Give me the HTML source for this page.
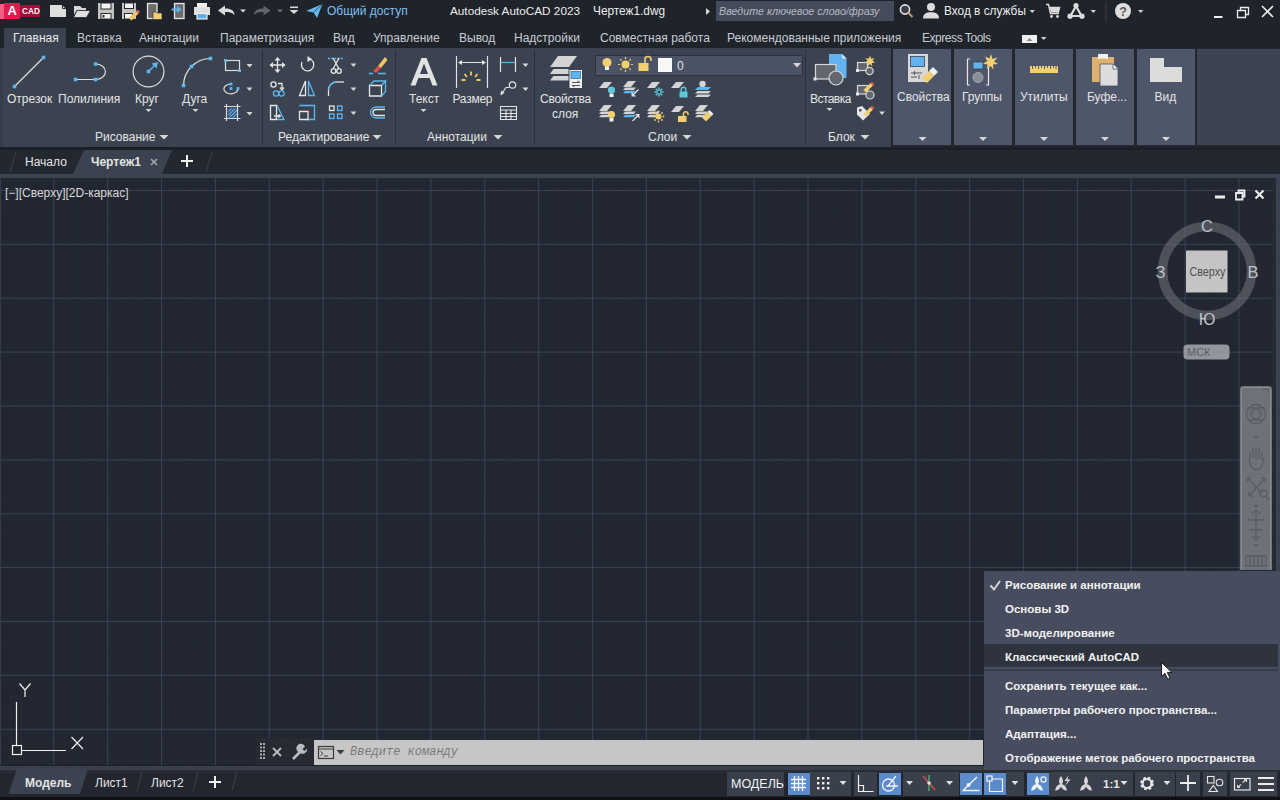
<!DOCTYPE html>
<html><head><meta charset="utf-8">
<style>
*{margin:0;padding:0;box-sizing:border-box}
html,body{width:1280px;height:800px;overflow:hidden;background:#212630;font-family:"Liberation Sans",sans-serif;font-size:12px;color:#e4e4e4}
.a{position:absolute}
.t{position:absolute;white-space:nowrap;line-height:14px}
svg{position:absolute;overflow:visible}
</style></head><body>
<!-- title bar + tab row -->
<div class="a" style="left:0;top:0;width:1280px;height:48px;background:#1f232a"></div>
<!-- ribbon -->
<div class="a" style="left:0;top:48px;width:1280px;height:99px;background:#3b4350"></div>
<div class="a" style="left:0;top:147px;width:1280px;height:3px;background:#1c1f25"></div>
<div class="a" style="left:0;top:48px;width:3px;height:99px;background:#363c48"></div>
<!-- file tabs row -->
<div class="a" style="left:0;top:150px;width:1280px;height:24px;background:#23272f"></div>
<div class="a" style="left:0;top:174px;width:1280px;height:4px;background:#3b4350"></div>
<!-- viewport -->
<div class="a" id="vp" style="left:0;top:178px;width:1280px;height:587px;background-color:#212630;
background-image:linear-gradient(90deg,rgba(80,86,122,.5) 1px,transparent 1px),linear-gradient(0deg,rgba(80,86,122,.5) 1px,transparent 1px),linear-gradient(90deg,rgba(60,66,86,.12) 1px,transparent 1px),linear-gradient(0deg,rgba(60,66,86,.12) 1px,transparent 1px);
background-size:53.88px 53.88px,53.88px 53.88px,10.776px 10.776px,10.776px 10.776px;background-position:53.3px 13px,53.3px 13px,53.3px 13px,53.3px 13px"></div>
<div class="a" style="left:1273px;top:178px;width:3px;height:587px;background:#262a33"></div>
<div class="a" style="left:1276px;top:174px;width:4px;height:592px;background:#3a4150"></div>
<div class="a" style="left:0;top:178px;width:1px;height:587px;background:#353b48"></div>
<!-- status bar -->
<div class="a" style="left:0;top:765px;width:1280px;height:1px;background:#1c1f26"></div>
<div class="a" style="left:0;top:766px;width:1280px;height:4px;background:#3a3f4c"></div>
<div class="a" style="left:0;top:770px;width:1280px;height:27px;background:#23262e"></div>
<div class="a" style="left:0;top:770px;width:1280px;height:3px;background:#292d36"></div>
<div class="a" style="left:0;top:797px;width:1280px;height:3px;background:#0e1014"></div>

<svg style="left:0;top:0" width="1280" height="800" viewBox="0 0 1280 800">
 <path d="M73 174L84 150H172L162 174Z" fill="#3b4350"/>
 <path d="M8.5 794L17 769H88L80 794Z" fill="#3b4350"/>
</svg>
<!-- ===== TITLE BAR ===== -->
<div class="a" style="left:4px;top:3px;width:16px;height:16px;background:#e5174e"></div>
<div class="a" style="left:0;top:4px;width:4px;height:15px;background:#ee5f86"></div>
<div class="t" style="left:7.5px;top:4px;font-weight:bold;font-size:13px;color:#fff">A</div>
<div class="a" style="left:20px;top:5px;width:20px;height:12px;background:#9c0f38"></div>
<div class="t" style="left:22px;top:4.5px;font-weight:bold;font-size:8.2px;color:#f8f8f8;letter-spacing:.1px">CAD</div>
<div class="t" style="left:327px;top:4px;color:#7cc0f0;font-size:12px">Общий доступ</div>
<div class="t" style="left:450px;top:4px;color:#ececec;font-size:11.75px">Autodesk AutoCAD 2023</div>
<div class="t" style="left:593px;top:4px;color:#ececec;font-size:11.85px">Чертеж1.dwg</div>
<div class="a" style="left:716px;top:1px;width:178px;height:20px;background:#454b5b"></div>
<div class="t" style="left:719px;top:4px;color:#b4b8c0;font-style:italic;font-size:10.7px">Введите ключевое слово/фразу</div>
<div class="t" style="left:944px;top:4px;color:#ececec;font-size:11.85px">Вход в службы</div>

<!-- ===== RIBBON TABS ===== -->
<div class="a" style="left:4px;top:28px;width:62px;height:20px;background:#3b4350"></div>
<div class="t" style="left:13px;top:31px;color:#e8e8e8;font-size:12px">Главная</div>
<div class="t" style="left:77px;top:31px;color:#c8ccd2;font-size:12px">Вставка</div>
<div class="t" style="left:139px;top:31px;color:#c8ccd2;font-size:12px">Аннотации</div>
<div class="t" style="left:220px;top:31px;color:#c8ccd2;font-size:12px">Параметризация</div>
<div class="t" style="left:333px;top:31px;color:#c8ccd2;font-size:12px">Вид</div>
<div class="t" style="left:373px;top:31px;color:#c8ccd2;font-size:12px">Управление</div>
<div class="t" style="left:459px;top:31px;color:#c8ccd2;font-size:12px">Вывод</div>
<div class="t" style="left:514px;top:31px;color:#c8ccd2;font-size:12px">Надстройки</div>
<div class="t" style="left:600px;top:31px;color:#c8ccd2;font-size:12px">Совместная работа</div>
<div class="t" style="left:727px;top:31px;color:#c8ccd2;font-size:12px">Рекомендованные приложения</div>
<div class="t" style="left:922px;top:31px;color:#c8ccd2;font-size:12px;letter-spacing:-.45px">Express Tools</div>

<!-- ===== RIBBON PANELS ===== -->
<div class="a" style="left:262px;top:50px;width:1px;height:95px;background:#2a2f38"></div>
<div class="a" style="left:395px;top:50px;width:1px;height:95px;background:#2a2f38"></div>
<div class="a" style="left:534px;top:50px;width:1px;height:95px;background:#2a2f38"></div>
<div class="a" style="left:805px;top:50px;width:1px;height:95px;background:#2a2f38"></div>
<div class="a" style="left:891px;top:48px;width:389px;height:99px;background:#23272f"></div>
<div class="a" style="left:893px;top:49px;width:58px;height:96px;background:#4e566a"></div>
<div class="a" style="left:954px;top:49px;width:58px;height:96px;background:#4e566a"></div>
<div class="a" style="left:1015px;top:49px;width:58px;height:96px;background:#4e566a"></div>
<div class="a" style="left:1076px;top:49px;width:58px;height:96px;background:#4e566a"></div>
<div class="a" style="left:1137px;top:49px;width:58px;height:96px;background:#4e566a"></div>
<div class="a" style="left:1197px;top:49px;width:83px;height:96px;background:#3c4351"></div>

<div class="t" style="left:7px;top:92px">Отрезок</div>
<div class="t" style="left:58px;top:92px">Полилиния</div>
<div class="t" style="left:135px;top:92px">Круг</div>
<div class="t" style="left:182px;top:92px">Дуга</div>
<div class="t" style="left:409px;top:92px">Текст</div>
<div class="t" style="left:452.5px;top:92px;letter-spacing:-.25px">Размер</div>
<div class="t" style="left:540px;top:92px;letter-spacing:-.2px">Свойства</div>
<div class="t" style="left:552px;top:107px">слоя</div>
<div class="t" style="left:810px;top:92px;letter-spacing:-.55px">Вставка</div>
<div class="t" style="left:897px;top:90px">Свойства</div>
<div class="t" style="left:962px;top:90px">Группы</div>
<div class="t" style="left:1020px;top:90px">Утилиты</div>
<div class="t" style="left:1087px;top:90px">Буфе...</div>
<div class="t" style="left:1154.5px;top:90px">Вид</div>

<div class="t" style="left:95px;top:130px">Рисование</div>
<div class="t" style="left:278px;top:130px">Редактирование</div>
<div class="t" style="left:427px;top:130px">Аннотации</div>
<div class="t" style="left:648px;top:130px">Слои</div>
<div class="t" style="left:828px;top:130px">Блок</div>

<!-- ===== FILE TABS ===== -->
<div class="t" style="left:25px;top:155px">Начало</div>
<div class="t" style="left:91px;top:155px;font-weight:bold">Чертеж1</div>

<!-- ===== VIEWPORT ===== -->
<div class="t" style="left:5px;top:186px;color:#d8d8d8">[−][Сверху][2D-каркас]</div>

<!-- ===== COMMAND LINE ===== -->
<div class="a" style="left:256px;top:738px;width:58px;height:27px;background:#262a33"></div>
<div class="a" style="left:314px;top:740px;width:669px;height:25px;background:#c6c6c6"></div>
<div class="t" style="left:350px;top:745px;color:#7a7a7a;font-style:italic;font-family:'Liberation Mono',monospace;font-size:12px">Введите  команду</div>

<!-- ===== STATUS BAR ===== -->
<div class="t" style="left:25px;top:776px;font-weight:bold">Модель</div>
<div class="t" style="left:95px;top:776px">Лист1</div>
<div class="t" style="left:151px;top:776px">Лист2</div>

<!-- ===== ICONS (title bar) ===== -->
<svg style="left:0;top:0" width="1280" height="800" viewBox="0 0 1280 800">
<g id="qat">
 <path d="M50 5H62L66 9V17H50Z" fill="#dedede"/>
 <path d="M62.5 5V8.5H66" fill="none" stroke="#2a2d33" stroke-width="1"/>
 <path d="M74 6H80L82 8H86V10.5H76.5L74 15Z" fill="#d6d6d6"/>
 <path d="M77 10.5H90.5L86.5 17.5H73.5Z" fill="#e0e0e0" stroke="#1f232a" stroke-width=".8"/>
 <rect x="98" y="3" width="16" height="16" fill="#c2c2c2"/>
 <rect x="101" y="3" width="10" height="6" fill="#f2f2f2" stroke="#2b2b2b" stroke-width="1"/>
 <rect x="101" y="13.5" width="10" height="5.5" fill="#f2f2f2" stroke="#2b2b2b" stroke-width="1"/>
 <rect x="102.5" y="15" width="2" height="2.5" fill="#2b2b2b"/>
 <rect x="122" y="3" width="14" height="16" fill="#c2c2c2"/>
 <rect x="124.5" y="3" width="9" height="5.5" fill="#f2f2f2" stroke="#2b2b2b" stroke-width="1"/>
 <rect x="124.5" y="13.5" width="8" height="5.5" fill="#f2f2f2" stroke="#2b2b2b" stroke-width="1"/>
 <path d="M129 18L136 11L138.5 13.5L131.5 20.5Z" fill="#f0c860"/>
 <path d="M136 11L137.5 9.5L140 12L138.5 13.5Z" fill="#e06060"/>
 <rect x="147.5" y="3.5" width="9.5" height="15" fill="#6c6c6c" stroke="#e6e6e6" stroke-width="1.3"/>
 <path d="M153 12H156L157 13H162V19.5H153Z" fill="#f2cf70" stroke="#1f232a" stroke-width=".6"/>
 <rect x="174.5" y="3.5" width="9.5" height="15" fill="#6c6c6c" stroke="#e6e6e6" stroke-width="1.3"/>
 <path d="M171.5 8.5H177V6L181.5 9.5L177 13V10.5H171.5Z" fill="#62b4f0"/>
 <rect x="197" y="3" width="10" height="5" fill="#f0f0f0"/>
 <rect x="194" y="7" width="16" height="8" fill="#e0e0e0"/>
 <rect x="197" y="13.5" width="10" height="5.5" fill="#5ab0ee" stroke="#f0f0f0" stroke-width="1.2"/>
 <path d="M218 10.5L225 5.5V8.5C230 8.5 234.5 10 234.5 15C232.5 12.5 229 12 225 12V15.5Z" fill="#dcdcdc"/>
 <path d="M240 9.5H246L243 12.5Z" fill="#d8d8d8"/>
 <path d="M270.5 10.5L263.5 5.5V8.5C258.5 8.5 254 10 254 15C256 12.5 259.5 12 263.5 12V15.5Z" fill="#5f646c"/>
 <path d="M277 9.5H283L280 12.5Z" fill="#70747c"/>
 <rect x="290" y="6.5" width="8" height="1.6" fill="#d8d8d8"/>
 <path d="M289.5 10H298.5L294 14Z" fill="#d8d8d8"/>
 <path d="M306 11L322.5 4L317 18L313.5 12.5Z" fill="#66b8f0"/>
 <path d="M313.5 12.5L322.5 4" stroke="#1f232a" stroke-width=".7"/>
</g>
<g id="tright">

 <path d="M706 8V15L710 11.5Z" fill="#d8d8d8"/>
 <circle cx="905" cy="9.5" r="4.6" fill="#3a3e46" stroke="#e2e2e2" stroke-width="1.6"/>
 <path d="M908.5 13L912.5 17" stroke="#c49a68" stroke-width="2"/>
 <circle cx="931" cy="7" r="4" fill="#dcdcdc"/>
 <path d="M923 18.5C923 13.8 926 12.2 931 12.2C936 12.2 939 13.8 939 18.5Z" fill="#dcdcdc"/>
 <path d="M1029.5 10H1035L1032.25 13Z" fill="#d0d0d0"/>
 <path d="M1046 4.5H1048.5L1050.5 13.5H1058L1059.5 7.5H1049.5" fill="none" stroke="#dcdcdc" stroke-width="1.5"/>
 <path d="M1050 8H1059V12.5H1051Z" fill="#dcdcdc"/>
 <circle cx="1051.5" cy="16.5" r="1.4" fill="#dcdcdc"/><circle cx="1057.5" cy="16.5" r="1.4" fill="#dcdcdc"/>
 <path d="M1076 6L1070.5 16M1076 6L1081.5 16M1070.5 16H1081.5" stroke="#dcdcdc" stroke-width="2.2" fill="none"/>
 <circle cx="1076" cy="5.5" r="2.6" fill="#dcdcdc"/><circle cx="1070" cy="16.2" r="2.6" fill="#dcdcdc"/><circle cx="1082" cy="16.2" r="2.6" fill="#dcdcdc"/>
 <path d="M1090.5 10H1096L1093.25 13Z" fill="#d0d0d0"/>
 <rect x="1105.5" y="2" width="1" height="20" fill="#3c414a"/>
 <circle cx="1123" cy="11" r="8" fill="#dedede"/>
 <text x="1123" y="15.5" text-anchor="middle" font-family="Liberation Sans" font-size="12.5" font-weight="bold" fill="#58585a">?</text>
 <path d="M1138 10H1143.5L1140.75 13Z" fill="#d0d0d0"/>
 <rect x="1214" y="16" width="8.5" height="2" fill="#ececec"/>
 <path d="M1237.5 10.5H1245.5V17.5H1237.5Z M1240.5 10.5V7.5H1248.5V14.5H1245.5" fill="none" stroke="#ececec" stroke-width="1.3"/>
 <path d="M1262 6L1273 17M1273 6L1262 17" stroke="#ececec" stroke-width="1.6"/>
 <rect x="1022" y="35" width="15" height="8" fill="#f0f0f0"/>
 <path d="M1026.5 41H1032.5L1029.5 38Z" fill="#8a8a8a"/>
 <path d="M1041 37H1046.5L1043.75 40Z" fill="#d0d0d0"/>
</g>
<g id="draw" fill="none" stroke="#dcdcdc" stroke-width="1.2">
 <path d="M14.5 86.5L43.5 57.5"/>
 <path d="M75.5 79.5H95.5M95.5 64A10 7.75 0 0 1 95.5 79.5"/>
 <circle cx="148.5" cy="71.5" r="15.4"/>
 <path d="M148.5 71.5L155 65" stroke="#5cb8f2" stroke-width="1.5"/>
 <path d="M158 62L151.5 63.5L156.5 68.5Z" fill="#5cb8f2" stroke="none"/>
 <path d="M183.5 85.5A27.3 27.3 0 0 1 210.5 58.5"/>
 <rect x="225.5" y="60.5" width="14" height="10"/>
 <path d="M231 84.2A7 4.8 0 1 0 237.8 88.5"/>
 <path d="M226.5 104V121M237.5 104V121M224 106.5H240.5M224 118.5H240.5"/>
 <g fill="#5cb8f2" stroke="none">
  <rect x="12.75" y="84.75" width="3.5" height="3.5"/><rect x="41.75" y="55.75" width="3.5" height="3.5"/>
  <rect x="73.75" y="77.75" width="3.5" height="3.5"/><rect x="93.75" y="77.75" width="3.5" height="3.5"/><rect x="93.75" y="62.25" width="3.5" height="3.5"/>
  <rect x="146.75" y="69.75" width="3.5" height="3.5"/>
  <rect x="181.75" y="83.75" width="3.5" height="3.5"/><rect x="189.75" y="64.75" width="3.5" height="3.5"/><rect x="208.75" y="56.75" width="3.5" height="3.5"/>
  <rect x="224" y="59" width="2.8" height="2.8"/><rect x="238.2" y="69.2" width="2.8" height="2.8"/>
  <rect x="229.6" y="82.6" width="2.8" height="2.8"/><rect x="229.6" y="87.1" width="2.8" height="2.8"/><rect x="236.6" y="87.1" width="2.8" height="2.8"/>
  <rect x="228" y="108" width="9" height="10" fill="#35608c"/>
 </g>
 <path d="M228.5 111.5L231.5 108.5M228.5 115L235 108.5M229.5 117.5L237 110M233 117.5L237 113.5" stroke="#8ccaf6" stroke-width="1"/>
</g>
<g id="tris" fill="#d6d6d6">
 <path d="M246.5 64H252.5L249.5 67.5Z"/><path d="M246.5 87.5H252.5L249.5 91Z"/><path d="M246.5 112H252.5L249.5 115.5Z"/>
 <path d="M145.5 109H151.5L148.5 112Z"/><path d="M192.5 109H198.5L195.5 112Z"/>
 <path d="M159.5 135H168.5L164 139.5Z"/>
 <path d="M350.5 63.5H356.5L353.5 67Z"/><path d="M350.5 87.5H356.5L353.5 91Z"/><path d="M350.5 111.5H356.5L353.5 115Z"/>
 <path d="M372.5 135H381.5L377 139.5Z"/>
 <path d="M420.5 109H426.5L423.5 112Z"/>
 <path d="M522.5 63.5H528.5L525.5 67Z"/><path d="M522.5 87.5H528.5L525.5 91Z"/>
 <path d="M493.5 135H502.5L498 139.5Z"/>
 <path d="M682.5 135H691.5L687 139.5Z"/>
 <path d="M826.5 108H832.5L829.5 111Z"/><path d="M879 111.5H885L882 115Z"/>
 <path d="M860.5 135H869.5L865 139.5Z"/>
 <path d="M918.5 137H926.5L922.5 141Z"/><path d="M979 137H987L983 141Z"/><path d="M1040 137H1048L1044 141Z"/><path d="M1101 137H1109L1105 141Z"/><path d="M1162 137H1170L1166 141Z"/>
</g>
<g id="edit" fill="none" stroke="#e6e6e6" stroke-width="1.3">
 <path d="M277.5 58V72M270.5 65H284.5"/>
 <path d="M277.5 57L274.5 60.5H280.5ZM277.5 73L274.5 69.5H280.5ZM269.5 65L273 62V68ZM285.5 65L282 62V68Z" fill="#e6e6e6" stroke="none"/>
 <path d="M310.5 59.2A6.2 6.2 0 1 1 302 62"/>
 <path d="M307.5 56L312 59.3L307.5 62Z" fill="#e6e6e6" stroke="none"/>
 <path d="M328 58.5H344" stroke="#5cb8f2" stroke-dasharray="2 1.2"/>
 <path d="M333 58L339 69M339 58L333 69"/>
 <circle cx="333.5" cy="71" r="2.3"/><circle cx="339" cy="71" r="2.3"/>
 <path d="M378 66L385 57L387.5 60L381 68Z" fill="#f0c860" stroke="none"/>
 <path d="M373 71L378 66L381 68L376 73Z" fill="#e05050" stroke="none"/>
 <path d="M369 73.5H373M378 73.5H386" stroke="#5cb8f2"/>
 <circle cx="273.5" cy="84.5" r="2.6"/>
 <path d="M278 83.5H282V88.5" /><path d="M280 87.5L282 90L284 87.5" />
 <circle cx="276" cy="93.5" r="2.6" stroke="#5cb8f2"/><circle cx="281.5" cy="93.5" r="2.6" stroke="#5cb8f2"/>
 <path d="M299.5 95.5L305.5 81V95.5Z"/><path d="M308.5 81L314.5 95.5H308.5Z" stroke="#5cb8f2"/>
 <path d="M328.5 96V90A8 8 0 0 1 336.5 82" stroke="#e6e6e6"/><path d="M336.5 82H344" />
 <path d="M328.5 90A8 8 0 0 1 336.5 82" stroke="#5cb8f2"/>
 <path d="M369.5 85.5H381.5V96H369.5Z"/><path d="M369.5 85.5L374 81H385.5L381.5 85.5M385.5 81V91.5L381.5 96" stroke="#5cb8f2"/>
 <path d="M270.5 105.5H276.5V119.5H270.5Z"/><path d="M277 105.5L284 119.5H277" stroke="#5cb8f2"/>
 <path d="M274 116H280M278.5 114.5L280.5 116L278.5 117.5"/>
 <path d="M299.5 105.5H314.5V119.5H305" stroke="#5cb8f2"/><path d="M299.5 111.5H308V119.5H299.5Z"/>
 <rect x="329.5" y="106" width="4.5" height="4.5"/><rect x="337.5" y="106" width="4.5" height="4.5" stroke="#5cb8f2"/>
 <rect x="329.5" y="114" width="4.5" height="4.5" stroke="#5cb8f2"/><rect x="337.5" y="114" width="4.5" height="4.5" stroke="#5cb8f2"/>
 <path d="M385 107H376A5.5 5.5 0 0 0 376 118H385" stroke="#5cb8f2"/>
 <path d="M385 109.5H376A3 3 0 0 0 376 115.5H385"/>
</g>
<g id="annot">
 <path d="M421.5 58H426.5L437.5 85.5H432.5L429.6 78H418.4L415.5 85.5H410.5ZM424 63.5L420 74H428Z" fill="#e2e2e2" fill-rule="evenodd"/>
 <path d="M456.5 56V88M487.5 56V88M459 62.5H485" fill="none" stroke="#e2e2e2" stroke-width="1.2"/>
 <path d="M458 62.5L462 60V65ZM486 62.5L482 60V65Z" fill="#e2e2e2"/>
 <path d="M471 71.5V75.5M464.5 74L467 77M477.5 74L475 77M461.5 80H465.5M476.5 80H480.5" stroke="#f0c860" stroke-width="1.8"/>
 <path d="M500.5 57V72M515.5 57V72" stroke="#e2e2e2" stroke-width="1.2"/>
 <path d="M501 62.5H515" stroke="#5cb8f2" stroke-width="1.2"/>
 <circle cx="512.5" cy="85" r="3.2" fill="none" stroke="#e2e2e2" stroke-width="1.2"/>
 <path d="M509.5 87.5L506 87.5L501.5 94" fill="none" stroke="#e2e2e2" stroke-width="1.2"/>
 <path d="M500.5 95.5L501 90.5L504.5 93Z" fill="#e2e2e2"/>
 <path d="M500.5 106.5H516.5V119.5H500.5ZM500.5 110H516.5M500.5 113.5H516.5M500.5 116.5H516.5M506 110V119.5M511 110V119.5" fill="none" stroke="#e2e2e2" stroke-width="1.1"/>
</g>
<g id="layers">
<path d="M558 56H577L569 67H550Z" fill="#d4d4d4"/>
<path d="M553.5 69H576L572.5 74H550Z" fill="#d4d4d4"/>
<path d="M553.5 76H576L572.5 80.5H550Z" fill="#d4d4d4"/>
<rect x="569" y="69.5" width="13.5" height="19" fill="#f0f0f0" stroke="#3b4350" stroke-width="1"/>
<rect x="571" y="71.5" width="9.5" height="7" fill="#5cb8f2" stroke="#3a4a5a" stroke-width=".6"/>
<path d="M572 82.5H580M577.5 81L580 82.5M572 85.5H580M574.5 87L572 85.5" stroke="#555" stroke-width="1" fill="none"/>
<rect x="595.5" y="55.5" width="207" height="20" fill="#4b5366" stroke="#2c313a" stroke-width="1"/>
<circle cx="607" cy="62.5" r="4.5" fill="#f2cf70"/><rect x="605" y="66.5" width="4" height="3.5" fill="#f0f0f0"/>
<circle cx="625.5" cy="64.5" r="4" fill="#f2cf70"/>
<path d="M625.5 57V59M625.5 70V72M618 64.5H620M631 64.5H633M620.2 59.2L621.6 60.6M629.4 68.4L630.8 69.8M630.8 59.2L629.4 60.6M621.6 68.4L620.2 69.8" stroke="#f2cf70" stroke-width="1.2"/>
<rect x="638.5" y="63" width="10" height="8" fill="#f2cf70"/>
<path d="M645 63V59.5A3 3 0 0 1 651 59.5V61" fill="none" stroke="#f2cf70" stroke-width="1.6"/>
<rect x="658" y="58" width="14" height="14" fill="#f8f8f8"/>
<text x="677" y="70" font-family="Liberation Sans" font-size="12" fill="#e4e4e4">0</text>
<path d="M793 63H801L797 67.5Z" fill="#d6d6d6"/>
<path d="M604 82H612L607 88H599Z" fill="#d4d4d4"/>
<circle cx="611.5" cy="90" r="3.6" fill="#5cc8d8"/><rect x="609.5" y="93.5" width="4" height="3.5" fill="#f0f0f0"/>
<path d="M628 81H636L631 87H623Z" fill="#d4d4d4"/><path d="M625.2 87.5H636L633.8 90.1H623Z" fill="#d4d4d4"/><path d="M625.2 90.7H636L633.8 93.3H623Z" fill="#5cb8f2"/>
<path d="M638.5 89.5L632.5 95.5" stroke="#e6e6e6" stroke-width="1.3"/><path d="M631.5 96.5V92L636 96.5Z" fill="#e6e6e6"/>
<path d="M652 82H660L655 88H647Z" fill="#d4d4d4"/>
<path d="M654.5 92H663.5M659 87.5V96.5M655.8 88.8L662.2 95.2M662.2 88.8L655.8 95.2" stroke="#5cc8d8" stroke-width="1.5"/><circle cx="659" cy="92" r="1.6" fill="#3b4350"/>
<path d="M676 82H684L679 88H671Z" fill="#d4d4d4"/>
<rect x="679.5" y="91.5" width="8" height="6" fill="#5cc8d8"/><path d="M681.2 91.5V89.5A2.3 2.3 0 0 1 685.8 89.5V91.5" fill="none" stroke="#5cc8d8" stroke-width="1.5"/>
<circle cx="702.5" cy="84" r="3.2" fill="#d4d4d4"/>
<path d="M698 87H711L708 90H695Z" fill="#5cb8f2"/><path d="M697.6 91H711L708.4 93.6H695Z" fill="#d4d4d4"/><path d="M697.6 94.5H711L708.4 97.1H695Z" fill="#d4d4d4"/>
<path d="M604 105H612L607 111H599Z" fill="#d4d4d4"/><path d="M601.2 111.5H612L609.8 114.1H599Z" fill="#d4d4d4"/><path d="M601.2 114.7H612L609.8 117.3H599Z" fill="#d4d4d4"/>
<circle cx="611.5" cy="114.5" r="3.6" fill="#f2cf70"/><rect x="609.5" y="118" width="4" height="3.5" fill="#f0f0f0"/>
<path d="M628 105H636L631 111H623Z" fill="#d4d4d4"/><path d="M625.2 111.5H636L633.8 114.1H623Z" fill="#d4d4d4"/><path d="M625.2 114.7H636L633.8 117.3H623Z" fill="#5cb8f2"/>
<path d="M632.5 121L638.5 115" stroke="#e6e6e6" stroke-width="1.3"/><path d="M639.5 114V118.5L635 114Z" fill="#e6e6e6"/>
<path d="M652 105H660L655 111H647Z" fill="#d4d4d4"/><path d="M649.2 111.5H660L657.8 114.1H647Z" fill="#d4d4d4"/><path d="M649.2 114.7H660L657.8 117.3H647Z" fill="#d4d4d4"/>
<circle cx="658.5" cy="116.5" r="3" fill="#f2cf70"/><g fill="#f2cf70"><circle cx="658.5" cy="111.5" r=".9"/><circle cx="658.5" cy="121.5" r=".9"/><circle cx="653.5" cy="116.5" r=".9"/><circle cx="663.5" cy="116.5" r=".9"/><circle cx="655" cy="113" r=".9"/><circle cx="662" cy="120" r=".9"/><circle cx="662" cy="113" r=".9"/><circle cx="655" cy="120" r=".9"/></g>
<path d="M676 106H684L679 112H671Z" fill="#d4d4d4"/>
<rect x="678" y="116" width="8.5" height="6" fill="#f2cf70"/><path d="M683.5 116V113.5A2.3 2.3 0 0 1 688 113.5V115" fill="none" stroke="#f2cf70" stroke-width="1.5"/>
<path d="M700 105H708L703 111H695Z" fill="#d4d4d4"/><path d="M697.2 111.5H708L705.8 114.1H695Z" fill="#d4d4d4"/><path d="M697.2 114.7H708L705.8 117.3H695Z" fill="#d4d4d4"/>
<path d="M702 117.5L707.5 112L711.5 116L706 121.5Z" fill="#f2cf70"/><path d="M707.5 112L709.5 110L713.5 114L711.5 116Z" fill="#f0f0f0"/>
</g>
<g id="block">
 <path d="M829 54H842L846.5 58.5V78H829Z" fill="#62b4f0"/>
 <path d="M842 54V58.5H846.5" fill="#cde8fb"/>
 <rect x="815.5" y="64.5" width="20.5" height="14.5" fill="#62666e" stroke="#d8d8d8" stroke-width="1.2"/>
 <circle cx="836" cy="78" r="7" fill="#62666e" stroke="#d8d8d8" stroke-width="1.2"/>
 <rect x="813.5" y="77.5" width="3" height="3" fill="#e6e6e6"/>
 <g stroke="#d8d8d8" stroke-width="1.2" fill="#62666e">
  <rect x="857.5" y="62.5" width="10" height="8"/><circle cx="869.5" cy="71" r="3.6"/>
  <rect x="857.5" y="85.5" width="10" height="8.5"/><circle cx="870" cy="95" r="4"/>
 </g>
 <rect x="856" y="69" width="3" height="3" fill="#e6e6e6"/><rect x="856" y="92.5" width="3" height="3" fill="#e6e6e6"/>
 <path d="M870 55.5L871.2 58.8L874.5 58L872.5 60.8L875.3 62.5L871.8 63L872.3 66.5L870 64L867.7 66.5L868.2 63L864.7 62.5L867.5 60.8L865.5 58L868.8 58.8Z" fill="#f2cf70"/>
 <path d="M863.5 90L870.5 83L873 85.5L866 92.5Z" fill="#f2cf70"/><path d="M870.5 83L872 81.5L874.5 84L873 85.5Z" fill="#e05050"/>
 <path d="M857 107.5L862 106L870 114L863 120.5L857 114.5Z" fill="#e6e6e6"/>
 <rect x="859" y="109" width="2.5" height="2.5" fill="#555"/>
 <path d="M863.5 114L870.5 107L873 109.5L866 116.5Z" fill="#f2cf70"/><path d="M870.5 107L872 105.5L874.5 108L873 109.5Z" fill="#e05050"/>
</g>
<g id="collapsed">
 <rect x="908" y="54" width="20" height="28" fill="#d8d8d8"/>
 <rect x="910.5" y="56.5" width="14" height="10" fill="#62b4f0" stroke="#3a4450" stroke-width=".8"/>
 <path d="M911 73H922M914.5 71V75M911 77H917M919 75V79" stroke="#555" stroke-width="1"/>
 <path d="M922 78L929 71L934 76L927 83Z" fill="#f2cf70"/>
 <path d="M929 71L933 67L938 72L934 76Z" fill="#f0f0f0"/>
 <path d="M970 59H967.5V85H970M986 59H988.5V85H986" fill="none" stroke="#e6e6e6" stroke-width="1.2"/>
 <rect x="973" y="62" width="10" height="7" fill="#62b4f0" stroke="#3a4450" stroke-width=".8"/>
 <circle cx="978" cy="77.5" r="5" fill="#8a8e96" stroke="#b0b4ba" stroke-width=".8"/>
 <path d="M991 54L992.5 59L997.5 57.5L994 61.5L998 64L993 64.5L993.5 69.5L990.5 66L987 69L987.5 64.5L983 63.5L987.5 61L985 56.5L989.5 58.5Z" fill="#f2cf70"/>
 <rect x="1030" y="66" width="28" height="7" fill="#f2cf70"/>
 <path d="M1032.5 66V69M1035.5 66V68M1038.5 66V69M1041.5 66V68M1044.5 66V69M1047.5 66V68M1050.5 66V69M1053.5 66V68M1056 66V69" stroke="#485062" stroke-width=".9"/>
 <rect x="1092" y="57" width="22" height="25" fill="#e0b070"/>
 <rect x="1098" y="54" width="10" height="5" fill="#f0f0f0"/>
 <rect x="1100.5" y="58.5" width="5" height="2" fill="#e0b070"/>
 <path d="M1100 64H1113L1118 69V86H1100Z" fill="#dcdcdc" stroke="#485062" stroke-width=".8"/>
 <path d="M1113 64V69H1118" fill="#f8f8f8" stroke="#485062" stroke-width=".8"/>
 <path d="M1150 58H1164V67H1182V82H1150Z" fill="#dcdcdc"/>
</g>
<g id="filetabs">
 <path d="M10 172L16 152M206 172L212 152" stroke="#3a3f49" stroke-width="1"/>
 <path d="M151 159L157 165M157 159L151 165" stroke="#a6aab0" stroke-width="1.6"/>
 <path d="M187 155V167M181 161H193" stroke="#f0f0f0" stroke-width="2"/>
</g>
<g id="vpctl">
 <rect x="1215" y="195.5" width="10" height="3" fill="#ececec"/>
 <path d="M1236 193V199.5H1242.5V193ZM1238.5 192.5V190.5H1244.5V196.5H1243" fill="none" stroke="#ececec" stroke-width="1.8"/>
 <path d="M1255.5 190.5L1263.5 198.5M1263.5 190.5L1255.5 198.5" stroke="#ececec" stroke-width="2.2"/>
</g>
<g id="viewcube">
 <circle cx="1207" cy="271" r="44.5" fill="none" stroke="#6c7078" stroke-width="9.5" opacity=".58"/>
 <rect x="1186" y="250.5" width="41.5" height="42" fill="#c4c4c4"/>
 <text x="1207.5" y="276" text-anchor="middle" font-family="Liberation Sans" font-size="12.5" fill="#4e5054" textLength="36" lengthAdjust="spacingAndGlyphs">Сверху</text>
 <text x="1207" y="232" text-anchor="middle" font-family="Liberation Sans" font-size="16.5" fill="#bfc2c8">С</text>
 <text x="1160.5" y="278" text-anchor="middle" font-family="Liberation Sans" font-size="16.5" fill="#bfc2c8">З</text>
 <text x="1253" y="278" text-anchor="middle" font-family="Liberation Sans" font-size="16.5" fill="#bfc2c8">В</text>
 <text x="1207" y="325" text-anchor="middle" font-family="Liberation Sans" font-size="16.5" fill="#bfc2c8">Ю</text>
 <rect x="1183.5" y="344.5" width="46" height="15" rx="4" fill="#92969c"/>
 <text x="1187" y="356" font-family="Liberation Sans" font-size="11" fill="#5c6068">МСК</text>
 <path d="M1212 352H1224" stroke="#8a8e94" stroke-width="1"/>
</g>
<g id="navbar">
 <path d="M1240 570V389A3 3 0 0 1 1243 386H1269A3 3 0 0 1 1272 389V570Z" fill="#74787e" opacity=".93"/>
 <path d="M1241.5 570V389.5A2 2 0 0 1 1243.5 387.5H1268.5A2 2 0 0 1 1270.5 389.5V570" fill="none" stroke="#8a8e94" stroke-width="1"/>
 <path d="M1262 389.5H1268V392" fill="none" stroke="#5c6068" stroke-width="1"/>
 <g fill="none" stroke="#585c64" stroke-width="1.3">
  <circle cx="1256" cy="414" r="9.5"/>
  <circle cx="1256" cy="414" r="5"/>
  <path d="M1247 408H1265M1249 420H1263"/>
  <path d="M1250 460V452M1253 459V448M1256 459V447M1259 459V448M1262 460V452M1249 459Q1250 469 1256 470Q1263 469 1264 458"/>
  <path d="M1247 478L1262 493M1265 478L1249 496M1247 478V482M1247 478H1251M1265 478V482M1265 478H1261M1249 496H1253M1249 496V492"/>
  <circle cx="1263.5" cy="493.5" r="3.5"/><path d="M1266 496L1269 500"/>
  <path d="M1256 512V538M1248 520H1264M1250 530H1262M1252 514L1256 510L1260 514M1252 536L1256 540L1260 536"/>
  <path d="M1246 556H1266V566H1246ZM1250 556V566M1254 556V566M1258 556V566M1262 556V566"/>
 </g>
 <g fill="#585c64">
  <path d="M1253.5 436H1258.5L1256 439Z"/><path d="M1253.5 505H1258.5L1256 508Z"/><path d="M1253.5 544H1258.5L1256 547Z"/>
 </g>
</g>
<g id="ucs" fill="none" stroke="#f0f0f0" stroke-width="1.2">
 <path d="M16.5 702V745.5M22 750.5H66"/>
 <rect x="12.5" y="745.5" width="9" height="9"/>
 <path d="M71.5 737L83 749M83 737L71.5 749"/>
 <path d="M19.5 683.5L25 690M30.5 683.5L25 690V697"/>
</g>
<g id="cmd">
 <g fill="#a8acb2">
  <rect x="260" y="743" width="2" height="2"/><rect x="263" y="743" width="2" height="2"/>
  <rect x="260" y="746.5" width="2" height="2"/><rect x="263" y="746.5" width="2" height="2"/>
  <rect x="260" y="750" width="2" height="2"/><rect x="263" y="750" width="2" height="2"/>
  <rect x="260" y="753.5" width="2" height="2"/><rect x="263" y="753.5" width="2" height="2"/>
  <rect x="260" y="757" width="2" height="2"/><rect x="263" y="757" width="2" height="2"/>
 </g>
 <path d="M273 748L281 756M281 748L273 756" stroke="#b8bcc2" stroke-width="1.8"/>
 <path d="M293 759L301 751" stroke="#b8bcc2" stroke-width="2.6"/>
 <path d="M299.5 752.5A4.5 4.5 0 1 1 305 746.5L302.5 749L304.5 751L307 748.5A4.5 4.5 0 0 1 299.5 752.5Z" fill="#b8bcc2"/>
 <rect x="318.5" y="746.5" width="15" height="12" fill="none" stroke="#3c3c3c" stroke-width="1.2"/>
 <path d="M318.5 749H333.5" stroke="#3c3c3c" stroke-width="1"/>
 <path d="M320.5 751.5L323 753.5L320.5 755.5M324 756H328" fill="none" stroke="#3c3c3c" stroke-width="1"/>
 <path d="M336.5 750H344.5L340.5 754.5Z" fill="#3c3c3c"/>
</g>
<g id="status">
 <path d="M137 791L142 772M193 791L198 772M232 791L237 772" stroke="#3c414a" stroke-width="1"/>
 <path d="M215 776V788M209 782H221" stroke="#f0f0f0" stroke-width="2"/>
 <g fill="#393f4b">
  <rect x="727" y="772" width="57" height="24"/>
  <rect x="810" y="772" width="41" height="24"/>
  <rect x="854" y="772" width="23" height="24"/>
  <rect x="903" y="772" width="56" height="24"/>
  <rect x="1006" y="772" width="18" height="24"/>
  <rect x="1049" y="772" width="84" height="24"/>
  <rect x="1135" y="772" width="40" height="24"/>
  <rect x="1176" y="772" width="24" height="24"/>
  <rect x="1203" y="772" width="24" height="24"/>
  <rect x="1230" y="772" width="47" height="24"/>
 </g>
 <g fill="#5b8bcb">
  <rect x="788" y="773" width="22" height="22"/>
  <rect x="879" y="773" width="22" height="22"/>
  <rect x="960" y="773" width="22" height="22"/>
  <rect x="984" y="773" width="22" height="22"/>
  <rect x="1027" y="773" width="22" height="22"/>
 </g>
 <path d="M791 779.5H806M791 783.5H806M791 787.5H806M794.5 776V791M798.5 776V791M802.5 776V791" stroke="#f8f8f8" stroke-width="1.3"/>
 <g fill="#f0f0f0">
  <rect x="817" y="777" width="2.4" height="2.4"/><rect x="822" y="777" width="2.4" height="2.4"/><rect x="827" y="777" width="2.4" height="2.4"/>
  <rect x="817" y="782" width="2.4" height="2.4"/><rect x="822" y="782" width="2.4" height="2.4"/><rect x="827" y="782" width="2.4" height="2.4"/>
  <rect x="817" y="787" width="2.4" height="2.4"/><rect x="822" y="787" width="2.4" height="2.4"/><rect x="827" y="787" width="2.4" height="2.4"/>
 </g>
 <g fill="#e0e0e0">
  <path d="M839.5 781H846.5L843 785Z"/><path d="M906 781H913L909.5 785Z"/><path d="M946 781H953L949.5 785Z"/>
  <path d="M1011.5 781H1018.5L1015 785Z"/><path d="M1120.5 781H1127.5L1124 785Z"/><path d="M1163.5 781H1170.5L1167 785Z"/>
 </g>
 <path d="M858.5 775V791.5H873.5M858.5 785.5H863.5V791.5" fill="none" stroke="#f0f0f0" stroke-width="1.2"/>
 <circle cx="888.5" cy="785" r="6" fill="none" stroke="#f4f4f4" stroke-width="1.3"/>
 <path d="M886 786H898M888.5 785.5L896 776" stroke="#f4f4f4" stroke-width="1.3"/>
 <path d="M923 776L935 790" stroke="#e05050" stroke-width="1.2"/><path d="M929 775V791" stroke="#50c070" stroke-width="1.2"/>
 <circle cx="929" cy="783" r="1.8" fill="#e0e0e0"/>
 <path d="M962.5 790.5H979.5M963.5 790L977 777" stroke="#f4f4f4" stroke-width="1.4"/><circle cx="968.5" cy="785" r="2" fill="#f4f4f4"/>
 <rect x="987" y="776" width="5" height="5" fill="none" stroke="#f4f4f4" stroke-width="1.2"/>
 <path d="M992 779H1002.5V791.5H989.5V781" fill="none" stroke="#f4f4f4" stroke-width="1.2"/>
 <g transform="translate(1037 784.5)" fill="#f4f4f4"><path d="M0 -8.5Q4 -3.5 0 1Q-4 -3.5 0 -8.5Z"/><path d="M0 -8.5Q4 -3.5 0 1Q-4 -3.5 0 -8.5Z" transform="rotate(137)"/><path d="M0 -8.5Q4 -3.5 0 1Q-4 -3.5 0 -8.5Z" transform="rotate(-137)"/></g>
 <circle cx="1043.5" cy="779.5" r="2.6" fill="none" stroke="#f4f4f4" stroke-width="1.2"/>
 <g transform="translate(1061 784.5)" fill="#d8d8d8"><path d="M0 -8.5Q4 -3.5 0 1Q-4 -3.5 0 -8.5Z"/><path d="M0 -8.5Q4 -3.5 0 1Q-4 -3.5 0 -8.5Z" transform="rotate(137)"/><path d="M0 -8.5Q4 -3.5 0 1Q-4 -3.5 0 -8.5Z" transform="rotate(-137)"/></g>
 <path d="M1068.5 775.5L1064.5 781H1067.5L1065 786L1070.5 779.5H1067.5Z" fill="#d8d8d8"/>
 <g transform="translate(1086 784.5)" fill="#d8d8d8"><path d="M0 -8.5Q4 -3.5 0 1Q-4 -3.5 0 -8.5Z"/><path d="M0 -8.5Q4 -3.5 0 1Q-4 -3.5 0 -8.5Z" transform="rotate(137)"/><path d="M0 -8.5Q4 -3.5 0 1Q-4 -3.5 0 -8.5Z" transform="rotate(-137)"/></g>
 <text x="1103" y="788" font-family="Liberation Sans" font-size="11.5" font-weight="bold" fill="#e6e6e6">1:1</text>
 <circle cx="1147" cy="783.5" r="5.2" fill="none" stroke="#e6e6e6" stroke-width="3.2" stroke-dasharray="2.3 1.8"/>
 <circle cx="1147" cy="783.5" r="4.5" fill="none" stroke="#e6e6e6" stroke-width="2.2"/>
 <path d="M1188 775V791M1180 783H1196" stroke="#ececec" stroke-width="1.8"/>
 <rect x="1207.5" y="776.5" width="6.5" height="6.5" fill="none" stroke="#e6e6e6" stroke-width="1.1"/>
 <circle cx="1219.5" cy="782.5" r="3.3" fill="none" stroke="#e6e6e6" stroke-width="1.1"/>
 <path d="M1209 791.5H1217.5L1213.25 785.5Z" fill="none" stroke="#e6e6e6" stroke-width="1.1"/>
 <rect x="1234.5" y="778.5" width="15.5" height="11.5" fill="none" stroke="#e6e6e6" stroke-width="1.2"/>
 <path d="M1242.5 782.5L1246.5 779.5M1246.5 779.5H1244M1246.5 779.5V782M1237.5 787.5L1241 784.5M1237.5 787.5V785M1237.5 787.5H1240" stroke="#e6e6e6" stroke-width="1.1" fill="none"/>
 <path d="M1258 778H1274M1258 784H1274M1258 790H1274" stroke="#ececec" stroke-width="1.8"/>
</g>
</svg>
<div class="t" style="left:731px;top:777px;font-size:12.5px;color:#f2f2f2">МОДЕЛЬ</div>

<!-- ===== MENU ===== -->
<div class="a" style="left:984px;top:571px;width:296px;height:199px;background:#474d5f"></div>
<div class="a" style="left:984px;top:644px;width:294px;height:23px;background:#2e333e"></div>
<div class="t" style="left:1005px;top:578px;font-weight:bold;font-size:11.5px;color:#f2f2f2">Рисование и аннотации</div>
<div class="t" style="left:1005px;top:602px;font-weight:bold;font-size:11.5px;color:#f2f2f2">Основы 3D</div>
<div class="t" style="left:1005px;top:626px;font-weight:bold;font-size:11.5px;color:#f2f2f2">3D-моделирование</div>
<div class="t" style="left:1005px;top:650px;font-weight:bold;font-size:11.5px;color:#f2f2f2">Классический AutoCAD</div>
<div class="t" style="left:1005px;top:679px;font-weight:bold;font-size:11.5px;color:#f2f2f2">Сохранить текущее как...</div>
<div class="t" style="left:1005px;top:703px;font-weight:bold;font-size:11.5px;color:#f2f2f2">Параметры рабочего пространства...</div>
<div class="t" style="left:1005px;top:727px;font-weight:bold;font-size:11.5px;color:#f2f2f2">Адаптация...</div>
<div class="t" style="left:1005px;top:751px;font-weight:bold;font-size:11.5px;color:#f2f2f2">Отображение меток рабочего пространства</div>
<svg style="left:0;top:0" width="1280" height="800" viewBox="0 0 1280 800">
 <path d="M990.5 585.5L994 589.5L1000 581" fill="none" stroke="#d8d8d8" stroke-width="1.9"/>
 <rect x="984" y="669.5" width="294" height="1.2" fill="#2e333e"/>
 <path d="M1161.5 662.5V676.5L1165 673.3L1167.8 679.3L1170 678.3L1167.4 672.6H1172Z" fill="#f6f6f6" stroke="#111" stroke-width=".9"/>
</svg>
</body></html>
